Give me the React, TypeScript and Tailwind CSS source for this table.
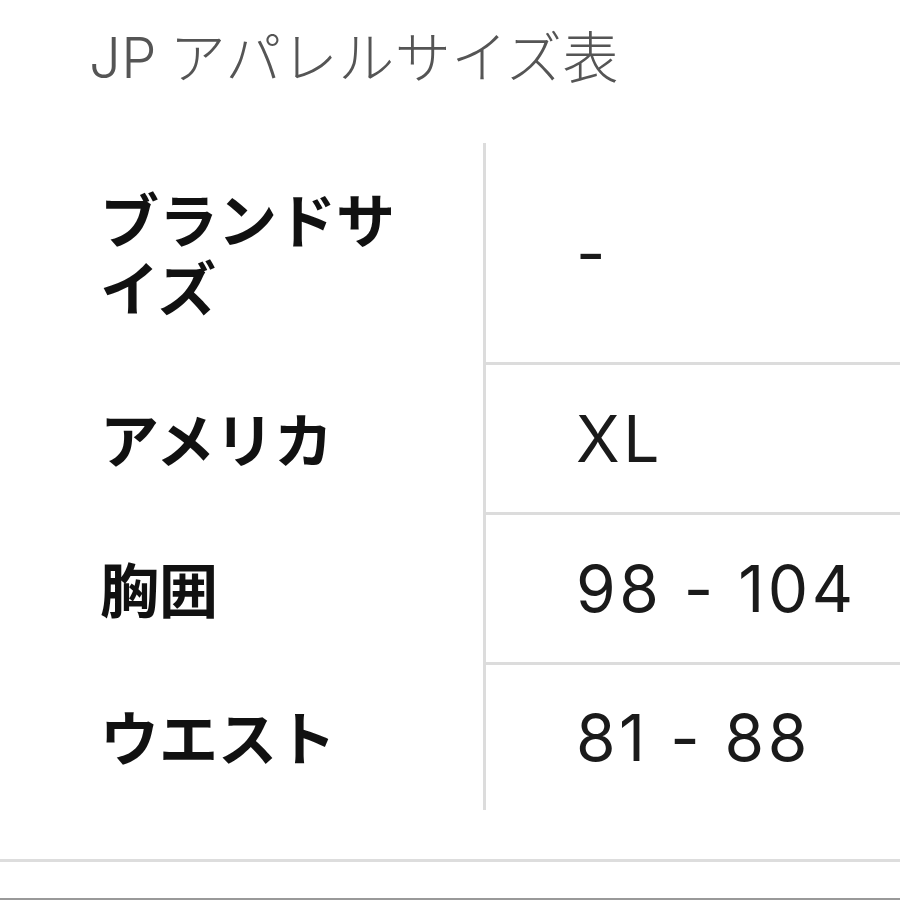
import React from "react";

const rows = [
  { label: "ブランドサイズ", value: "-", h: "h-[222px]", border: true },
  { label: "アメリカ", value: "XL", h: "h-[150px]", border: true },
  { label: "胸囲", value: "98 - 104", h: "h-[150px]", border: true },
  { label: "ウエスト", value: "81 - 88", h: "h-[145px]", border: false },
];

export default function App() {
  return (
    <div
      className="w-[900px] h-[900px] bg-white overflow-hidden flex flex-col"
      style={{ fontFamily: '"Noto Sans CJK JP", "Noto Sans", sans-serif' }}
    >
      <div className="h-[143px] pl-[89px] pt-[26px]">
        <h1 className="text-[56px] leading-none font-light text-[#555555] tracking-[0.5px]">
          <span style={{ fontFamily: 'Inter, "Noto Sans CJK JP", sans-serif' }}>JP</span> アパレルサイズ表
        </h1>
      </div>
      <div className="grid grid-cols-[483px_1fr]">
        {rows.map((r) => (
          <React.Fragment key={r.label}>
            <div className={`${r.h} pl-[100px] flex items-center`}>
              <div className="w-[310px] text-[59px] leading-[68px] font-bold text-[#111111] pb-[4px]">
                {r.label}
              </div>
            </div>
            <div
              className={`${r.h} border-l-[3px] border-[#dcdcdc] pl-[90px] flex items-center ${
                r.border ? "border-b-[3px]" : ""
              }`}
            >
              <span
                className="text-[64px] leading-none text-[#1a1a1a] tracking-[3.5px]"
                style={{ fontFamily: 'Inter, "Noto Sans CJK JP", sans-serif' }}
              >
                {r.value}
              </span>
            </div>
          </React.Fragment>
        ))}
      </div>
      <div className="h-[49px]" />
      <div className="h-[3px] bg-[#dddddd]" />
      <div className="flex-1" />
      <div className="h-[2px] bg-[#999999]" />
    </div>
  );
}
